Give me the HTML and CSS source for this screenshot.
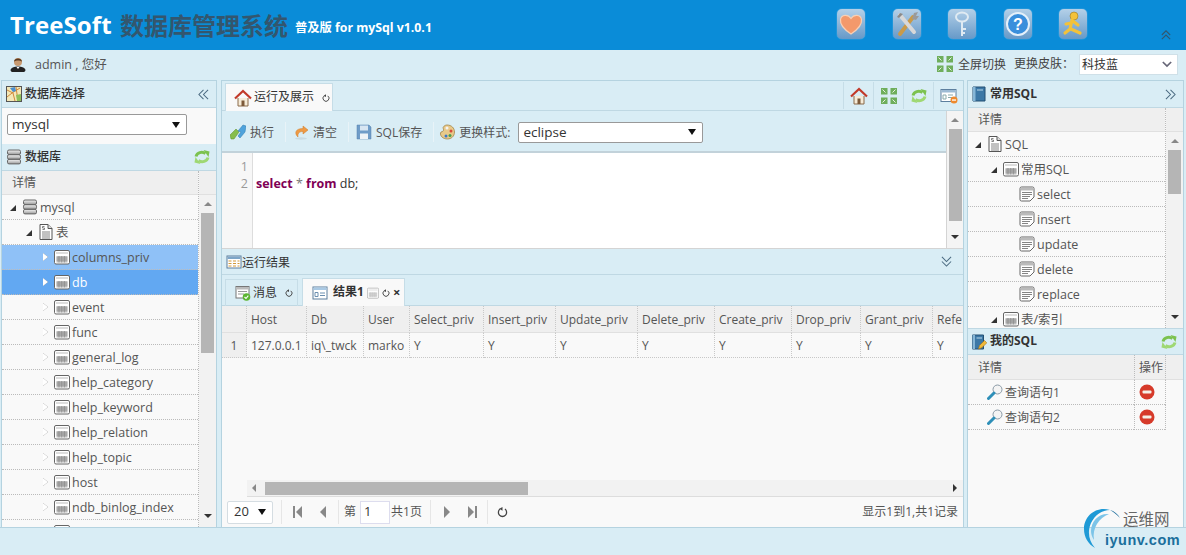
FILE: index.html
```html
<!DOCTYPE html>
<html lang="zh">
<head>
<meta charset="utf-8">
<title>TreeSoft</title>
<link rel="stylesheet" href="styles.css">
</head>
<body>
<svg class="defs" width="0" height="0">
  <defs>
    <linearGradient id="gSilver" x1="0" y1="0" x2="0" y2="1"><stop offset="0" stop-color="#f4f4f4"/><stop offset="1" stop-color="#9a9a9a"/></linearGradient>
    <symbol id="i-table" viewBox="0 0 16 16"><rect x=".5" y="1.5" width="15" height="13.5" rx="1.5" fill="#fff" stroke="#666"/><rect x="2" y="3" width="12" height="2" fill="#ddd"/><path d="M2.5 7h11v6.500h-11z" fill="#bbb"/><path d="M2.500 9h11M2.500 11h11M5 7v6.500M7.700 7v6.500M10.400 7v6.500" stroke="#888" stroke-width=".7"/></symbol>
    <symbol id="i-db" viewBox="0 0 16 16"><rect x="1.500" y="1" width="13" height="4.500" rx="1.500" fill="url(#gSilver)" stroke="#666"/><rect x="1.500" y="5.700" width="13" height="4.500" rx="1.500" fill="url(#gSilver)" stroke="#666"/><rect x="1.500" y="10.400" width="13" height="4.500" rx="1.500" fill="url(#gSilver)" stroke="#666"/></symbol>
    <symbol id="i-sql" viewBox="0 0 16 16"><path d="M2 .5h8l4 4v11H2z" fill="#fff" stroke="#555"/><path d="M10 .5v4h4" fill="#ddd" stroke="#555"/><path d="M6.500 2.500H4.500v1.500h2v1.500h-2M4 8h8M4 10h8M4 12h8M4 14h8" fill="none" stroke="#666" stroke-width=".8"/></symbol>
    <symbol id="i-doc" viewBox="0 0 16 16"><path d="M1 2.500Q1 1 2.500 1h11Q15 1 15 2.500V11l-4 4H2.500Q1 15 1 13.500z" fill="#fff" stroke="#666"/><rect x="2" y="2" width="12" height="2.500" fill="#bbb"/><path d="M3 6.500h10M3 8.500h10M3 10.500h8M3 12.500h6" stroke="#777" stroke-width=".9"/></symbol>
    <symbol id="i-refresh" viewBox="0 0 16 16"><path d="M2 7.500C3 3.500 8 2 11.500 4.500" fill="none" stroke="#7cc24f" stroke-width="3"/><path d="M9.500 1L15.500 2.500 14.500 8z" fill="#7cc24f"/><path d="M14 8.500C13 12.500 8 14 4.500 11.500" fill="none" stroke="#9fd873" stroke-width="3"/><path d="M6.500 15L.5 13.500 1.500 8z" fill="#9fd873"/></symbol>
    <symbol id="i-home" viewBox="0 0 18 18"><path d="M4 9v8h10V9" fill="#f6ecd9" stroke="#8a6a4a"/><rect x="7.500" y="11.500" width="3" height="5.500" fill="#7d5a3a"/><path d="M1 9.500L9 2l8 7.500" fill="none" stroke="#c23a2a" stroke-width="2.200"/></symbol>
    <symbol id="i-grid" viewBox="0 0 16 16"><rect x="1" y="2" width="14" height="12" fill="#fff" stroke="#5d7f9e"/><rect x="1.500" y="2.500" width="13" height="2.500" fill="#7ea6c8"/><path d="M2.500 7h3M7 7h3M11.500 7h2M2.500 9.500h3M7 9.500h3M11.500 9.500h2M2.500 12h3M7 12h3M11.500 12h2" stroke="#d49a3a" stroke-width="1.200"/></symbol>
    <symbol id="i-form" viewBox="0 0 16 16"><rect x="1" y="2" width="14" height="12" fill="#fff" stroke="#5d7f9e"/><rect x="1.500" y="2.500" width="13" height="2.500" fill="#a9c9e4"/><path d="M3 7.500h3v4H3zM8 8h5M8 10.500h5" fill="none" stroke="#6b8fb0"/></symbol>
    <symbol id="i-msg" viewBox="0 0 16 16"><rect x="1" y="1.500" width="13" height="11.500" fill="#fff" stroke="#777"/><rect x="1.500" y="2" width="12" height="2.500" fill="#bbb"/><path d="M3 6.500h9M3 9h6" stroke="#999"/><circle cx="11.500" cy="12" r="3.800" fill="#5cb531"/><path d="M9.500 12l1.500 1.500 2.300-2.800" fill="none" stroke="#fff" stroke-width="1.100"/></symbol>
    <symbol id="i-book" viewBox="0 0 16 16"><path d="M2 1h12v14H2z" fill="#3c78a6" stroke="#234f72"/><path d="M2 1h2.500v14H2z" fill="#86b6d6"/><rect x="6" y="3.500" width="6" height="1" fill="#b9d7ea"/></symbol>
    <symbol id="i-mybook" viewBox="0 0 16 16"><path d="M1.500 1h11v14h-11z" fill="#3c78a6" stroke="#234f72"/><path d="M1.500 1H4v14H1.500z" fill="#86b6d6"/><rect x="5.500" y="3.500" width="5.500" height="1" fill="#b9d7ea"/><path d="M7.500 15l1-3.500 5-5 2.300 2.300-5 5z" fill="#f0b93a" stroke="#a5741a" stroke-width=".6"/></symbol>
    <symbol id="i-map" viewBox="0 0 16 16"><rect x=".5" y=".5" width="15" height="15" fill="#f3e8b8" stroke="#555"/><path d="M1 4l6 3 2 8M1 11l5-4 8-5M10 1l2 14" fill="none" stroke="#d0883a"/><path d="M4 2l3 4 3-1-1-4z" fill="#4a8fd0"/><path d="M10 9l5-1v7h-4z" fill="#8fbf5a"/></symbol>
    <symbol id="i-run" viewBox="0 0 16 16"><path d="M0 11l6-6 3 3-5 7H1z" fill="#86bd4d" stroke="#5d8c2d" stroke-width=".5"/><path d="M8 7l5-6 3 1-1 6-5 6-2-2 3-4z" fill="#4fa3dc" stroke="#2c78ad" stroke-width=".5"/></symbol>
    <symbol id="i-clear" viewBox="0 0 16 16"><path d="M10 2l5 4-5 4V7.500C6 7.500 4.500 9.500 5 13 1.500 10 1.500 4.500 10 4.500z" fill="#ee9a45" stroke="#cf7a26" stroke-width=".5"/><ellipse cx="8" cy="14.500" rx="6" ry="1.200" fill="#c9dbe3"/></symbol>
    <symbol id="i-save" viewBox="0 0 16 16"><path d="M1 1h12l2 2v12H1z" fill="#6f9cc8" stroke="#5582ad" stroke-width=".5"/><rect x="4" y="1.500" width="8" height="5" fill="#d8e6f2"/><rect x="4" y="9.500" width="8" height="5.500" fill="#eef3f7"/></symbol>
    <symbol id="i-palette" viewBox="0 0 16 16"><path d="M8 1c4.500 0 7.500 3 7.500 7 0 4.500-3.500 7-7 7C4 15 1 12 1.500 9 2 7 4 8 4.500 6.500 5 4.500 3 4 5 2.200 6 1.300 7 1 8 1z" fill="#e8c98a" stroke="#9a7a3a" stroke-width=".7"/><circle cx="8" cy="4" r="1.500" fill="#f4f4f4"/><circle cx="12" cy="7" r="1.500" fill="#d84a3a"/><circle cx="11" cy="11.500" r="1.500" fill="#4aa04a"/><circle cx="7" cy="12" r="1.500" fill="#3a78c8"/></symbol>
    <symbol id="i-expand" viewBox="0 0 16 16"><path d="M0 0h6.500v6.500H0zM9.500 0H16v6.500H9.500zM0 9.500h6.500V16H0zM9.500 9.500H16V16H9.500z" fill="#6fae5c"/><path d="M1.500 1.500l3 3M14.500 1.500l-3 3M1.500 14.500l3-3M14.500 14.500l-3-3" stroke="#e6f3e0"/></symbol>
    <symbol id="i-closeall" viewBox="0 0 18 16"><rect x="1" y="1.500" width="15" height="12" fill="#fff" stroke="#5d7f9e"/><rect x="1.500" y="2" width="14" height="2.500" fill="#9dbbd4"/><path d="M3 7h3v4H3zM8 7h5M8 9.500h4" fill="none" stroke="#8aa"/><circle cx="14" cy="12" r="3.500" fill="#ee8a2e"/><rect x="12" y="11.400" width="4" height="1.300" fill="#fff"/></symbol>
    <symbol id="i-user" viewBox="0 0 16 16"><ellipse cx="8" cy="14" rx="7.500" ry="3.500" fill="#222"/><path d="M6.500 11l1.500 2 1.500-2z" fill="#fff"/><circle cx="8" cy="6" r="4" fill="#c89a70"/><path d="M4 5.500C4.500 1.500 11.500 1.500 12 5.500 10 4 6 4 4 5.500z" fill="#5a3a20"/></symbol>
    <symbol id="i-search" viewBox="0 0 16 16"><circle cx="10.500" cy="5.500" r="4.500" fill="#f4f4f4" stroke="#8a9aa6"/><path d="M7 9l-5.500 5.500" stroke="#2e8fb8" stroke-width="3" stroke-linecap="round"/></symbol>
    <symbol id="i-del" viewBox="0 0 16 16"><circle cx="8" cy="8" r="7.500" fill="#d63a2a"/><rect x="3.500" y="6.500" width="9" height="3" rx="1" fill="#f4efe6"/></symbol>
    <symbol id="i-heart" viewBox="0 0 28 30"><path d="M14 25C5 19 3 14 3.500 10.500 4.500 5.500 11 5 14 9.500 17 5 23.500 5.500 24.500 10.500 25 14 23 19 14 25z" fill="#f3996b" stroke="#f8d0b5" stroke-width="1.200"/></symbol>
    <symbol id="i-tools" viewBox="0 0 28 30"><path d="M7 25L20 8" stroke="#c99a4a" stroke-width="4" stroke-linecap="round"/><path d="M7 6l14 17" stroke="#d8d8d8" stroke-width="4" stroke-linecap="round"/><path d="M4 8l3-4 3 1-4 4z" fill="#8a8a8a"/><path d="M19 10l2-6 4-1-2 4 3 0-3 4z" fill="#9a9a9a"/></symbol>
    <symbol id="i-key" viewBox="0 0 28 30"><ellipse cx="14" cy="8" rx="6" ry="4.500" fill="none" stroke="#dfeaf2" stroke-width="2"/><path d="M14 12.500V27M14 20h4M14 24h3" stroke="#dfeaf2" stroke-width="2"/></symbol>
    <symbol id="i-help" viewBox="0 0 28 30"><circle cx="14" cy="15" r="11" fill="#3a8fdc" stroke="#e4f0fa" stroke-width="2"/><text x="14" y="21" text-anchor="middle" font-size="16" font-weight="700" font-family="Liberation Sans" fill="#fff">?</text></symbol>
    <symbol id="i-run2" viewBox="0 0 28 30"><circle cx="15" cy="7" r="4" fill="#f3c23a" stroke="#8a6a1a" stroke-width=".5"/><path d="M13 11l-2 9-5 4M14 12l5 4M12 14l-5 1M12 20l9 4" fill="none" stroke="#f3c23a" stroke-width="3.200" stroke-linecap="round"/></symbol>
    <symbol id="i-reload" viewBox="0 0 12 12"><path d="M8.700 2.800A4.500 4.500 0 1 1 3.300 2.800" fill="none" stroke="#444" stroke-width="1.400"/><path d="M6 .5v4L2.500 2.500z" fill="#444"/></symbol>
    <symbol id="i-logo" viewBox="0 0 40 42"><path d="M27 3C13-1 1 9 1 22c0 8 4 15 11 19C6 34 4 25 8 16 12 8 19 3 27 3z" fill="#1f9ad6"/><path d="M26 7C16 6 8 14 8 24c0 3 1 6 3 9-2-12 5-22 15-26z" fill="#7cc4e8"/><path d="M27 3c4 1 8 4 10 8-3-3-6-6-10-8z" fill="#1f6f9e"/></symbol>
    <symbol id="i-chev-l" viewBox="0 0 12 12"><path d="M6 1L1 6l5 5M11 1L6 6l5 5" fill="none" stroke="#4a6a80" stroke-width="1.100"/></symbol>
    <symbol id="i-chev-r" viewBox="0 0 12 12"><path d="M1 1l5 5-5 5M6 1l5 5-5 5" fill="none" stroke="#4a6a80" stroke-width="1.100"/></symbol>
    <symbol id="i-chev-d" viewBox="0 0 12 12"><path d="M1 1l5 5 5-5M1 6l5 5 5-5" fill="none" stroke="#4a6a80" stroke-width="1.100"/></symbol>
    <symbol id="i-chev-u" viewBox="0 0 12 12"><path d="M1 6l5-5 5 5M1 11l5-5 5 5" fill="none" stroke="#33566e" stroke-width="1.300"/></symbol>
  </defs>
</svg>

<header class="topbar">
  <h1 class="brand"><span class="brand-en">TreeSoft</span><span class="brand-cn">数据库管理系统</span><span class="brand-sub">普及版 for mySql v1.0.1</span></h1>
  <nav class="launch">
    <span class="tile"><svg><use href="#i-heart"/></svg></span>
    <span class="tile"><svg><use href="#i-tools"/></svg></span>
    <span class="tile"><svg><use href="#i-key"/></svg></span>
    <span class="tile"><svg><use href="#i-help"/></svg></span>
    <span class="tile"><svg><use href="#i-run2"/></svg></span>
  </nav>
  <svg class="collapse-top"><use href="#i-chev-u"/></svg>
</header>

<div class="userbar">
  <svg class="ico16 user-ico"><use href="#i-user"/></svg>
  <span class="user-name">admin , 您好</span>
  <span class="spacer"></span>
  <svg class="ico16"><use href="#i-expand"/></svg>
  <span class="fullscreen">全屏切换</span>
  <span class="skin-label">更换皮肤：</span>
  <div class="skin-select"><span>科技蓝</span><svg class="skin-arrow" viewBox="0 0 12 8"><path d="M1 1l5 5 5-5" fill="none" stroke="#667" stroke-width="2"/></svg></div>
</div>

<main class="layout">
  <aside class="panel">
    <div class="phead"><svg class="ico16"><use href="#i-map"/></svg><span class="ptitle">数据库选择</span><svg class="pchev"><use href="#i-chev-l"/></svg></div>
    <div class="dbpick"><div class="combo combo-db"><span>mysql</span><i class="tri"></i></div></div>
    <div class="phead"><svg class="ico16"><use href="#i-db"/></svg><span class="ptitle">数据库</span><svg class="ico16 prefresh"><use href="#i-refresh"/></svg></div>
    <div class="treewrap">
      <div class="treecol">
        <div class="thead">详情</div>
        <div class="row lv0"><i class="arr open"></i><svg class="ico16"><use href="#i-db"/></svg><span>mysql</span></div>
        <div class="row lv1"><i class="arr open"></i><svg class="ico16"><use href="#i-sql"/></svg><span>表</span></div>
        <div class="row lv2 hover"><i class="arr"></i><svg class="ico16"><use href="#i-table"/></svg><span>columns_priv</span></div>
        <div class="row lv2 sel"><i class="arr"></i><svg class="ico16"><use href="#i-table"/></svg><span>db</span></div>
        <div class="row lv2"><i class="arr"></i><svg class="ico16"><use href="#i-table"/></svg><span>event</span></div>
        <div class="row lv2"><i class="arr"></i><svg class="ico16"><use href="#i-table"/></svg><span>func</span></div>
        <div class="row lv2"><i class="arr"></i><svg class="ico16"><use href="#i-table"/></svg><span>general_log</span></div>
        <div class="row lv2"><i class="arr"></i><svg class="ico16"><use href="#i-table"/></svg><span>help_category</span></div>
        <div class="row lv2"><i class="arr"></i><svg class="ico16"><use href="#i-table"/></svg><span>help_keyword</span></div>
        <div class="row lv2"><i class="arr"></i><svg class="ico16"><use href="#i-table"/></svg><span>help_relation</span></div>
        <div class="row lv2"><i class="arr"></i><svg class="ico16"><use href="#i-table"/></svg><span>help_topic</span></div>
        <div class="row lv2"><i class="arr"></i><svg class="ico16"><use href="#i-table"/></svg><span>host</span></div>
        <div class="row lv2"><i class="arr"></i><svg class="ico16"><use href="#i-table"/></svg><span>ndb_binlog_index</span></div>
        <div class="row lv2"><i class="arr none"></i><svg class="ico16"><use href="#i-table"/></svg></div>
      </div>
      <div class="vscroll vs-tree">
        <div class="vs-headcell"></div>
        <div class="vs-body"><i class="sb-up"></i><b class="thumb th-left"></b><span class="spacer"></span><i class="sb-down"></i></div>
      </div>
    </div>
  </aside>

  <section class="center">
    <div class="tabstrip top-tabs">
      <div class="tab active tab-run"><svg class="ico18"><use href="#i-home"/></svg><span>运行及展示</span><svg class="reload"><use href="#i-reload"/></svg></div>
      <span class="spacer"></span>
      <span class="tool"><svg class="ico18"><use href="#i-home"/></svg></span>
      <span class="tool"><svg class="ico16"><use href="#i-expand"/></svg></span>
      <span class="tool"><svg class="ico16"><use href="#i-refresh"/></svg></span>
      <span class="tool"><svg class="ico18"><use href="#i-closeall"/></svg></span>
    </div>
    <div class="workarea">
      <div class="workmain">
        <div class="toolbar">
          <span class="tb"><svg class="ico16"><use href="#i-run"/></svg><span class="tb-text">执行</span></span><i class="sep"></i>
          <span class="tb"><svg class="ico16"><use href="#i-clear"/></svg><span class="tb-text">清空</span></span><i class="sep"></i>
          <span class="tb"><svg class="ico16"><use href="#i-save"/></svg><span class="tb-text">SQL保存</span></span><i class="sep"></i>
          <span class="tb tb-style"><svg class="ico16"><use href="#i-palette"/></svg><span class="tb-text">更换样式:</span></span>
          <div class="combo combo-style"><span>eclipse</span><i class="tri"></i></div>
        </div>
        <div class="editor">
          <div class="gutter"><div>1</div><div>2</div></div>
          <div class="code"><div>&nbsp;</div><div><span class="kw">select</span> <span class="op">*</span> <span class="kw">from</span> db;</div></div>
        </div>
      </div>
      <div class="vscroll vs-editor"><div class="vs-body"><i class="sb-up"></i><b class="thumb th-editor"></b><span class="spacer"></span><i class="sb-down"></i></div></div>
    </div>

    <div class="result-head"><svg class="ico16"><use href="#i-grid"/></svg><span>运行结果</span><svg class="pchev"><use href="#i-chev-d"/></svg></div>
    <div class="tabstrip res-tabs">
      <div class="tab tab-msg"><svg class="ico16"><use href="#i-msg"/></svg><span>消息</span><svg class="reload"><use href="#i-reload"/></svg></div>
      <div class="tab active tab-res"><svg class="ico16"><use href="#i-form"/></svg><b>结果1</b><svg class="ico12"><use href="#i-table"/></svg><svg class="reload"><use href="#i-reload"/></svg><span class="xclose">×</span></div>
    </div>
    <div class="grid">
      <div class="gh gnum"></div><div class="gh">Host</div><div class="gh">Db</div><div class="gh">User</div><div class="gh">Select_priv</div><div class="gh">Insert_priv</div><div class="gh">Update_priv</div><div class="gh">Delete_priv</div><div class="gh">Create_priv</div><div class="gh">Drop_priv</div><div class="gh">Grant_priv</div><div class="gh">Refe</div>
      <div class="gd gnum gnum-c">1</div><div class="gd">127.0.0.1</div><div class="gd">iq\_twck</div><div class="gd">marko</div><div class="gd">Y</div><div class="gd">Y</div><div class="gd">Y</div><div class="gd">Y</div><div class="gd">Y</div><div class="gd">Y</div><div class="gd">Y</div><div class="gd">Y</div>
    </div>
    <div class="grid-empty"></div>
    <div class="hscroll"><i class="sb-left"></i><b class="hthumb"></b><span class="spacer"></span><i class="sb-right"></i></div>
    <div class="pager">
      <div class="combo combo-page"><span>20</span><i class="tri"></i></div><i class="psep"></i>
      <i class="pb first"></i><i class="pb prev"></i><i class="psep psep-tight"></i>
      <span class="plabel">第</span><span class="pinput">1</span><span class="plabel">共1页</span><i class="psep"></i>
      <i class="pb next"></i><i class="pb last"></i><i class="psep psep-tight"></i>
      <svg class="preload"><use href="#i-reload"/></svg>
      <span class="spacer"></span>
      <span class="pinfo">显示1到1,共1记录</span>
    </div>
  </section>

  <aside class="panel panel-r">
    <div class="phead"><svg class="ico16"><use href="#i-book"/></svg><strong class="ptitle">常用SQL</strong><svg class="pchev"><use href="#i-chev-r"/></svg></div>
    <div class="treewrap treewrap-r">
      <div class="treecol">
        <div class="thead">详情</div>
        <div class="row lv0"><i class="arr open"></i><svg class="ico16"><use href="#i-sql"/></svg><span>SQL</span></div>
        <div class="row lv1"><i class="arr open"></i><svg class="ico16"><use href="#i-table"/></svg><span>常用SQL</span></div>
        <div class="row lv2"><i class="arr none"></i><svg class="ico16"><use href="#i-doc"/></svg><span>select</span></div>
        <div class="row lv2"><i class="arr none"></i><svg class="ico16"><use href="#i-doc"/></svg><span>insert</span></div>
        <div class="row lv2"><i class="arr none"></i><svg class="ico16"><use href="#i-doc"/></svg><span>update</span></div>
        <div class="row lv2"><i class="arr none"></i><svg class="ico16"><use href="#i-doc"/></svg><span>delete</span></div>
        <div class="row lv2"><i class="arr none"></i><svg class="ico16"><use href="#i-doc"/></svg><span>replace</span></div>
        <div class="row lv1 row-cut"><i class="arr open"></i><svg class="ico16"><use href="#i-table"/></svg><span>表/索引</span></div>
      </div>
      <div class="vscroll vs-tree">
        <div class="vs-headcell"></div>
        <div class="vs-body"><i class="sb-up"></i><b class="thumb th-right"></b><span class="spacer"></span><i class="sb-down"></i></div>
      </div>
    </div>
    <div class="phead phead-my"><svg class="ico16"><use href="#i-mybook"/></svg><strong class="ptitle">我的SQL</strong><svg class="ico16 prefresh"><use href="#i-refresh"/></svg></div>
    <div class="mytable">
      <div class="myh">详情</div><div class="myh myop">操作</div><div class="myh mypad"></div>
      <div class="myd"><svg class="ico16"><use href="#i-search"/></svg><span class="my-text">查询语句1</span></div><div class="myd myop"><svg class="ico16"><use href="#i-del"/></svg></div><div class="mypad"></div>
      <div class="myd"><svg class="ico16"><use href="#i-search"/></svg><span class="my-text">查询语句2</span></div><div class="myd myop"><svg class="ico16"><use href="#i-del"/></svg></div><div class="mypad"></div>
    </div>
  </aside>
</main>

<footer class="statusbar"></footer>

<div class="watermark">
  <svg class="wm-arc"><use href="#i-logo"/></svg>
  <span class="wm-cn">运维网</span>
  <span class="wm-en">iyunv.com</span>
</div>
</body>
</html>
```

FILE: styles.css
```css
* { box-sizing: border-box; }
html, body { margin: 0; height: 100%; overflow: hidden; }
body {
  width: 1186px; height: 555px; position: relative;
  display: flex; flex-direction: column;
  background: #d9edf5; color: #444;
  font: 12.500px/1.2 "Open Sans", "Noto Sans CJK SC", sans-serif;
}
svg { display: block; flex: none; }
.defs { position: absolute; }
.spacer { flex: 1; }
.ico16 { width: 16px; height: 16px; }
.ico18 { width: 18px; height: 18px; }
.ico12 { width: 12px; height: 12px; opacity: .5; }

/* top */
.topbar { height: 50px; flex: none; background: #0a8cd8; display: flex; align-items: flex-start; position: relative; }
.brand { margin: 0 0 0 10px; height: 50px; display: flex; align-items: center; font-weight: 700; white-space: nowrap; font-size: 12px; }
.brand-en { color: #fff; font: 700 24px/1 "Open Sans", sans-serif; width: 110px; letter-spacing: .1px; }
.brand-cn { color: #33566e; font: 700 24px/1 "Noto Sans CJK SC", sans-serif; width: 175px; }
.brand-sub { color: #fff; font: 700 12.300px/1 "Open Sans", "Noto Sans CJK SC", sans-serif; margin-top: 7px; }
.launch { position: absolute; left: 837px; top: 9px; display: flex; gap: 27.500px; }
.tile { width: 28px; height: 30px; border-radius: 5px; background: linear-gradient(#b4d0e8, #6699c8); box-shadow: 0 0 1px #cfe4f5; display: block; }
.tile svg { width: 28px; height: 30px; }
.collapse-top { position: absolute; left: 1160px; top: 30px; width: 12px; height: 10px; }

.userbar { height: 30px; flex: none; display: flex; align-items: center; padding: 0 8px 2px 10px; }
.user-ico { margin-right: 9px; }
.user-name { color: #555; }
.fullscreen { margin-left: 4px; font-size: 12px; padding-top: 3px; margin-left: 5px; }
.skin-label { margin-left: 8px; margin-right: 5px; font-size: 12px; padding-top: 1px; }
.skin-select { width: 99px; height: 21px; background: #fff; border: 1px solid #cfe0e8; display: flex; align-items: center; padding: 3px 0 0 2px; color: #333; font-size: 12px; }
.skin-select span { flex: 1; }
.skin-arrow { width: 10px; height: 7px; margin: -3px 5px 0 0; }

/* layout */
.layout { flex: 1; min-height: 0; display: grid; grid-template-columns: 216px 743px 216px; column-gap: 4px; padding-left: 1px; }
.layout > .panel-r { margin-left: -1px; }
.panel { border: 1px solid #b5d3e0; border-bottom: 0; background: #f9f9f9; display: flex; flex-direction: column; overflow: hidden; min-height: 0; }
.phead { height: 27px; flex: none; background: #d9edf5; border-bottom: 1px solid #bfd8e3; display: flex; align-items: center; padding: 0 4px; gap: 3px; font-size: 12px; color: #333; }
.ptitle { flex: 1; font-weight: 500; }
.pchev { width: 11px; height: 11px; margin-right: 3px; flex: none; }
.prefresh { margin-right: 2px; }
.dbpick { height: 36px; flex: none; padding: 6px 6px 0 5px; background: #f9f9f9; }
.combo { background: #fff; border: 1px solid #999; border-radius: 2px; display: flex; align-items: center; padding: 0 6px 0 4px; color: #333; font-size: 13.500px; height: 21px; }
.combo span { flex: 1; }
.combo-db { width: 180px; }
.tri { width: 0; height: 0; border: 4px solid transparent; border-top: 6px solid #111; border-bottom: 0; }
.treewrap { flex: 1; min-height: 0; display: flex; overflow: hidden; }
.treewrap-r { flex: none; height: 220px; }
.treecol { flex: 1; min-width: 0; overflow: hidden; }
.thead { height: 24px; background: #efefef; border-bottom: 1px solid #e0e0e0; display: flex; align-items: center; padding: 1px 0 0 10px; font-size: 12px; color: #555; }
.row { height: 25px; border-bottom: 1px dotted #bbb; display: flex; align-items: center; color: #555; font-size: 12.500px; white-space: nowrap; }
.lv0 { padding-left: 6px; }
.lv1 { padding-left: 22px; }
.lv2 { padding-left: 38px; }
.panel-r .row { margin-left: -1px; }
.panel-r .ptitle { font-weight: 700; }
.panel-r .phead { padding-left: 3px; }
.arr { width: 10px; margin-right: 4px; height: 9px; flex: none; position: relative; }
.arr::before { content: ""; position: absolute; left: 3px; top: 0; border: 4.500px solid transparent; border-left: 5px solid #fff; border-right: 0; filter: drop-shadow(0 0 .6px #666); }
.arr.open::before { left: 2px; top: 2px; border: 0; border-bottom: 6px solid #333; border-left: 6px solid transparent; filter: none; }
.arr.none::before { display: none; }
.row .ico16 { margin-right: 2px; }
.hover { background: #8fc1f7; }
.sel { background: #62a8f2; color: #fff; }

/* scrollbars */
.vscroll { flex: none; display: flex; flex-direction: column; }
.vs-tree { width: 18px; border-left: 1px dotted #bbb; }
.vs-headcell { height: 24px; flex: none; background: #efefef; border-bottom: 1px solid #e0e0e0; }
.vs-body { flex: 1; min-height: 0; display: flex; flex-direction: column; align-items: center; background: #f2f2f2; padding: 7px 0 4px; }
.thumb { display: block; width: 13px; background: #b5b5b5; flex: none; margin-top: 7px; }
.sb-up, .sb-down { flex: none; width: 0; height: 0; border: 4px solid transparent; }
.sb-up { border-bottom: 4px solid #888; border-top: 0; }
.sb-down { border-top: 4px solid #333; border-bottom: 0; margin-bottom: 5px; }
.th-left { height: 140px; }
.th-right { height: 44px; }
.th-editor { height: 92px; }
.vs-editor { width: 17px; border-left: 1px solid #d4d4d4; }
.vs-editor .vs-body { background: #f4f4f4; }

/* center */
.center { display: flex; flex-direction: column; min-width: 0; overflow: hidden; border-left: 1px solid #b5d3e0; border-right: 1px solid #b5d3e0; border-top: 1px solid #b5d3e0; background: #f9f9f9; }
.tabstrip { display: flex; align-items: flex-end; flex: none; background: #d9edf5; }
.top-tabs { height: 30px; border-bottom: 1px solid #bfd8e3; padding-left: 3px; }
.res-tabs { height: 31px; border-bottom: 1px solid #bfd8e3; padding-left: 3px; gap: 4px; }
.tab { height: 27px; display: flex; align-items: center; gap: 2px; border: 1px solid #c6dde7; border-bottom: 0; font-size: 12px; color: #333; padding: 0 6px; margin-bottom: -1px; white-space: nowrap; }
.tab.active { background: #f9f9f9; height: 28px; position: relative; }
.tab-run { width: 108px; padding-left: 8px; }
.tab-msg { width: 73px; padding-left: 9px; }
.tab-res { width: 103px; padding-left: 9px; gap: 3px; }
.tab-res b { margin-left: 2px; font-weight: 700; }
.reload { width: 8px; height: 8px; margin-left: 6px; }
.tab-res .reload { margin-left: 0; }
.xclose { font-weight: 700; font-size: 13px; line-height: 1; }
.tool { width: 30px; height: 27px; display: flex; align-items: center; justify-content: center; border-left: 1px solid #c6dde7; margin-bottom: 1px; }
.workarea { height: 138px; flex: none; display: flex; border-bottom: 1px solid #d4d4d4; }
.workmain { flex: 1; min-width: 0; display: flex; flex-direction: column; }
.toolbar { height: 42px; flex: none; background: #d9edf5; border-bottom: 2px solid #c2d2da; display: flex; align-items: center; padding: 2px 0 0 8px; font-size: 12px; color: #555; }
.tb { display: flex; align-items: center; gap: 4px; white-space: nowrap; }
.tb-text { padding-top: 2px; }
.sep { width: 1px; height: 20px; background: #e8f3f8; margin: 0 7px 0 11px; }
.tb-style { margin-left: -2px; margin-right: 8px; }
.combo-style { width: 185px; }
.editor { flex: 1; display: flex; background: #fff; min-height: 0; }
.gutter { width: 31px; flex: none; background: #f7f7f7; border-right: 1px solid #ddd; padding: 5px 4px 0 0; text-align: right; color: #999; font: 12.500px/17px "Open Sans", sans-serif; }
.code { padding: 5px 0 0 3px; font: 12.500px/17px "Open Sans", sans-serif; color: #333; }
.kw { color: #7f0055; font-weight: 700; }
.op { color: #777; }
.result-head { height: 26px; flex: none; background: #d9edf5; border-bottom: 1px solid #bfd8e3; display: flex; align-items: center; padding: 0 8px 0 4px; gap: 0; font-size: 12px; color: #333; }
.result-head span { flex: 1; padding-top: 3px; }

.grid { flex: none; display: grid; grid-template-columns: 25px 60px 57px 46px 74px 72px 82px 77px 77px 69px 72px 120px; grid-template-rows: 27px 25px; overflow: hidden; font-size: 12px; color: #555; white-space: nowrap; }
.gh, .gd { padding: 2px 0 0 4px; display: flex; align-items: center; border-right: 1px dotted #c8c8c8; border-bottom: 1px dotted #c8c8c8; overflow: hidden; }
.gh { background: #efefef; border-bottom: 1px solid #e0e0e0; }
.gnum { background: #efefef; }
.gnum-c { justify-content: center; padding: 2px 0 0; }
.grid-empty { flex: 1; min-height: 0; }
.hscroll { height: 17px; flex: none; margin-left: 25px; background: #f2f2f2; display: flex; align-items: center; padding: 0 6px 0 5px; border-bottom: 1px solid #ddd; }
.hthumb { width: 263px; height: 13px; background: #b5b5b5; margin-left: 9px; flex: none; }
.sb-left, .sb-right { width: 0; height: 0; border: 4px solid transparent; }
.sb-left { border-right: 4px solid #888; border-left: 0; }
.sb-right { border-left: 4px solid #333; border-right: 0; }
.pager { height: 30px; flex: none; display: flex; align-items: center; padding: 0 5px; font-size: 12px; color: #555; }
.combo-page { width: 46px; height: 23px; border-color: #d5dde2; font-size: 13px; padding-left: 6px; }
.psep { width: 1px; height: 24px; background: #e6e6e6; margin: 0 5px 0 8px; }
.psep-tight { margin-left: 3px; }
.pb { width: 24px; height: 12px; position: relative; display: block; }
.pb::before { content: ""; position: absolute; top: 0; width: 0; height: 0; border: 6px solid transparent; border-left: 0; border-right: 6px solid #888; left: 9px; }
.pb.next::before, .pb.last::before { border: 6px solid transparent; border-right: 0; border-left: 6px solid #888; left: 8px; }
.pb.first::after, .pb.last::after { content: ""; position: absolute; top: 0; width: 2px; height: 12px; background: #888; }
.pb.first::after { left: 6px; }
.pb.last::after { left: 15px; }
.plabel { white-space: nowrap; }
.pinput { width: 30px; height: 23px; background: #fff; border: 1px solid #dde; margin: 0 1px 0 4px; display: flex; align-items: center; padding-left: 3px; color: #333; font-size: 13px; }
.preload { width: 11px; height: 12px; margin-left: 4px; }
.pinfo { white-space: nowrap; }

/* right */
.phead-my { border-top: 1px solid #bfd8e3; }
.mytable { display: grid; grid-template-columns: 166px 31px 1fr; grid-auto-rows: 25px; font-size: 12px; color: #555; }
.myh { background: #efefef; border-bottom: 1px solid #e0e0e0; display: flex; align-items: center; padding: 2px 0 0 10px; }
.myh.myop { padding-left: 4px; }
.myop { border-left: 1px dotted #bbb; }
.mypad { border-left: 1px dotted #bbb; padding: 0; }
.myd { display: flex; align-items: center; border-bottom: 1px dotted #bbb; padding-left: 19px; gap: 2px; white-space: nowrap; }
.my-text { padding-top: 2px; }
.myd.myop { padding-left: 4px; }

.statusbar { height: 28px; flex: none; border-top: 1px solid #b5d3e0; }

/* watermark overlay */
.watermark { position: absolute; left: 1082px; top: 507px; width: 104px; height: 48px; }
.wm-arc { position: absolute; left: 1px; top: 0; width: 40px; height: 42px; }
.wm-cn { position: absolute; left: 41px; top: 2px; font: 15.500px/1.2 "Noto Sans CJK SC", sans-serif; color: #666; white-space: nowrap; }
.wm-en { position: absolute; left: 23px; top: 25px; font: 700 14.500px/1.2 "Liberation Sans", sans-serif; color: #1b6f9c; letter-spacing: .5px; white-space: nowrap; }
```
